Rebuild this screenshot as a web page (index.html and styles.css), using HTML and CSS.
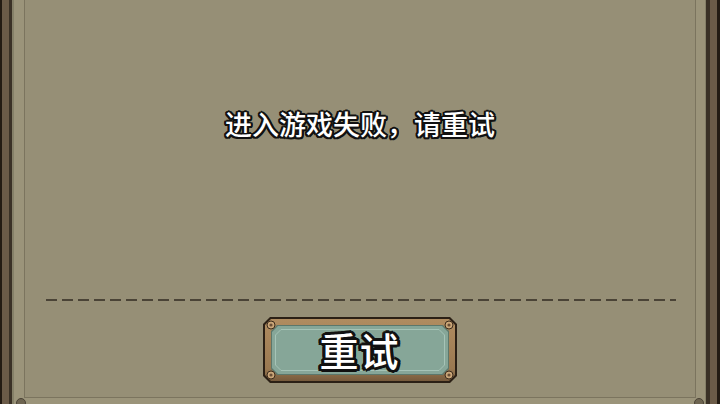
FILE: index.html
```html
<!DOCTYPE html>
<html lang="zh-CN">
<head>
    <meta charset="UTF-8">
    <meta name="viewport" content="width=device-width, initial-scale=1.0">
    <title>进入游戏失败</title>
    <link rel="stylesheet" href="styles.css">
</head>
<body>
    <div class="frame">
        <div class="panel">
            <!-- Error message -->
            <p class="message">进入游戏失败，请重试</p>

            <div class="divider"></div>

            <!-- Retry button -->
            <button class="retry-btn" type="button">
                <svg class="retry-bg" viewBox="0 0 194 66" width="194" height="66">
                    <defs>
                        <linearGradient id="wood" x1="0" y1="0" x2="0" y2="1">
                            <stop offset="0" stop-color="#b08c60"/>
                            <stop offset="0.8" stop-color="#9a7951"/>
                            <stop offset="1" stop-color="#765a3c"/>
                        </linearGradient>
                    </defs>
                    <polygon points="7,0 187,0 194,7 194,59 187,66 7,66 0,59 0,7" fill="#2b2015"/>
                    <polygon points="8,2 186,2 192,8 192,58 186,64 8,64 2,58 2,8" fill="url(#wood)"/>
                    <polygon points="14,8 180,8 186,14 186,52 180,58 14,58 8,52 8,14" fill="#5c776b"/>
                    <polygon points="15,9 179,9 185,15 185,51 179,57 15,57 9,51 9,15" fill="#86a698"/>
                    <polygon points="18,12.5 176,12.5 181.5,18 181.5,48 176,53.5 18,53.5 12.5,48 12.5,18" fill="none" stroke="#a6c4b7" stroke-width="1"/>
                    <g fill="#caa678" stroke="#3b2b1c" stroke-width="1">
                        <circle cx="8" cy="8" r="4"/>
                        <circle cx="186" cy="8" r="4"/>
                        <circle cx="8" cy="58" r="4"/>
                        <circle cx="186" cy="58" r="4"/>
                    </g>
                    <g fill="#6a4f36">
                        <circle cx="8" cy="8" r="1.6"/>
                        <circle cx="186" cy="8" r="1.6"/>
                        <circle cx="8" cy="58" r="1.6"/>
                        <circle cx="186" cy="58" r="1.6"/>
                    </g>
                </svg>
                <span class="retry-label">重试</span>
            </button>
        </div>
        <span class="rivet rivet-left"></span>
        <span class="rivet rivet-right"></span>
    </div>
</body>
</html>
```

FILE: styles.css
```css
html, body {
    margin: 0;
    height: 100%;
}

body {
    background-color: #968f76;
    font-family: "Noto Sans CJK SC", "Noto Sans", sans-serif;
    overflow: hidden;
}

/* wooden side rails */
.frame {
    position: relative;
    height: 404px;
    padding: 0 24px;
    box-sizing: border-box;
    background:
        linear-gradient(to right,
            #231b13 0 2px, #6b5b48 2px 9px, #3a3126 9px 12px, #858068 12px 14px,
            #9b947a 14px 24px, transparent 24px),
        linear-gradient(to left,
            #231b13 0 3px, #6b5b48 3px 10px, #3a3126 10px 14px, #858068 14px 15px,
            #9b947a 15px 24px, transparent 24px),
        #9b947a;
}

.panel {
    height: 398px;
    box-sizing: border-box;
    border: 1px solid #7b745e;
    border-top: none;
    background-color: #968f76;
    display: flex;
    flex-direction: column;
    align-items: center;
}

.message {
    margin: 107px 0 0;
    font-size: 27px;
    line-height: 34px;
    font-weight: 500;
    color: #ffffff;
    text-shadow:
        2px 0 0 #111, -2px 0 0 #111, 0 2px 0 #111, 0 -2px 0 #111,
        1.5px 1.5px 0 #111, -1.5px 1.5px 0 #111, 1.5px -1.5px 0 #111, -1.5px -1.5px 0 #111,
        2px 1px 0 #111, -2px 1px 0 #111, 2px -1px 0 #111, -2px -1px 0 #111;
}

.divider {
    align-self: stretch;
    margin: 158px 19px 0 21px;
    height: 2px;
    background: repeating-linear-gradient(to right, #4a4336 0 11px, transparent 11px 16px);
}

.retry-btn {
    position: relative;
    margin-top: 16px;
    margin-left: -1px;
    width: 194px;
    height: 66px;
    padding: 0;
    border: none;
    background: none;
    cursor: pointer;
    display: flex;
    align-items: center;
    justify-content: center;
}

.retry-bg {
    position: absolute;
    left: 0;
    top: 0;
}

.retry-label {
    position: relative;
    font-family: "Noto Sans CJK SC", sans-serif;
    font-size: 39px;
    font-weight: 500;
    line-height: 1;
    color: #ffffff;
    letter-spacing: 1px;
    margin-top: -2px;
    text-shadow:
        3px 0 0 #111, -3px 0 0 #111, 0 3px 0 #111, 0 -3px 0 #111,
        2px 2px 0 #111, -2px 2px 0 #111, 2px -2px 0 #111, -2px -2px 0 #111,
        3px 1.5px 0 #111, -3px 1.5px 0 #111, 3px -1.5px 0 #111, -3px -1.5px 0 #111;
}

/* bolts peeking at the bottom edge */
.rivet {
    position: absolute;
    bottom: -4px;
    width: 8px;
    height: 8px;
    border-radius: 50%;
    background-color: #6d6450;
    border: 1px solid #4a4336;
}

.rivet-left {
    left: 16px;
}

.rivet-right {
    right: 16px;
}
```
